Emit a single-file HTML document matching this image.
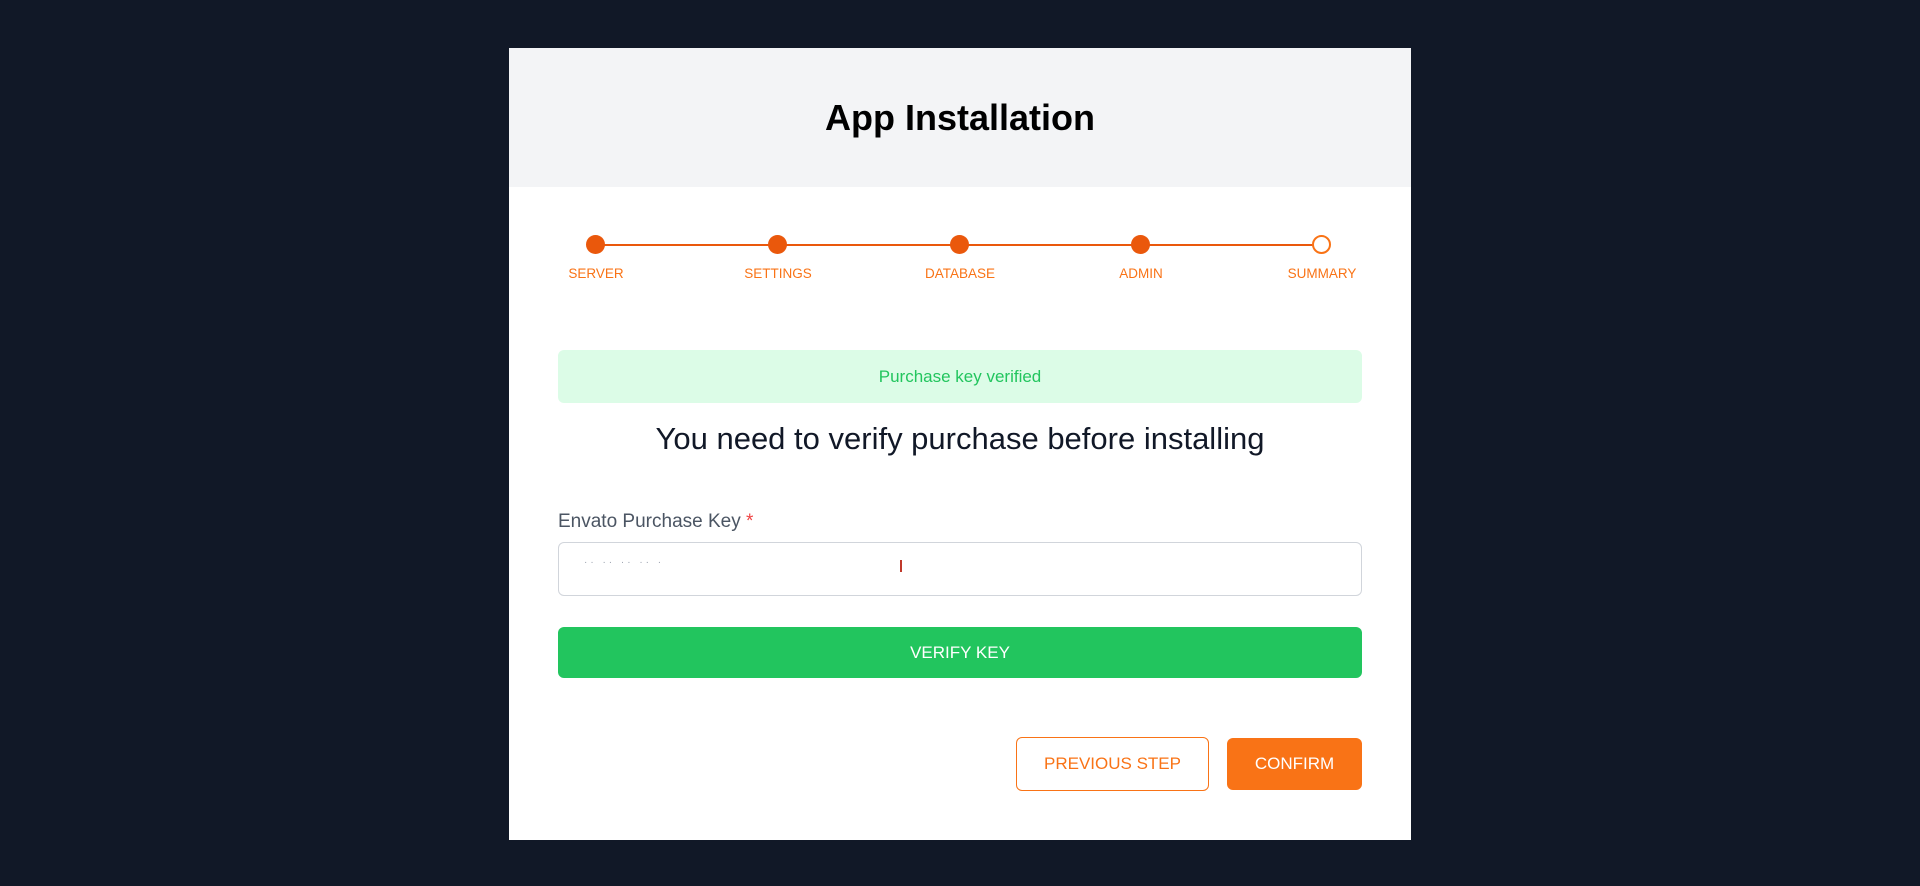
<!DOCTYPE html>
<html><head><meta charset="utf-8"><style>
*{box-sizing:border-box;margin:0;padding:0}
body{width:1920px;height:886px;background:#111827;font-family:"Liberation Sans",sans-serif;position:relative;overflow:hidden}
.card{position:absolute;left:509px;top:48px;width:902px;height:792px;background:#fff}
.hdr{position:absolute;left:0;top:0;width:902px;height:139px;background:#f3f4f6;text-align:center}
.hdr h1{font-size:36px;font-weight:bold;color:#000;line-height:139px}
.abs{position:absolute}
.line{position:absolute;left:87px;top:196px;width:726px;height:2px;background:#ea580c}
.dot{position:absolute;width:19px;height:19px;border-radius:50%;background:#ea580c;top:187px}
.lbl{position:absolute;top:218px;font-size:13.5px;color:#f97316;transform:translateX(-50%);white-space:nowrap}
</style></head><body>
<div class="card">
<div class="hdr"><h1>App Installation</h1></div>
<div class="line"></div>
<div class="dot" style="left:77px"></div>
<div class="dot" style="left:259px"></div>
<div class="dot" style="left:441px"></div>
<div class="dot" style="left:622px"></div>
<div class="dot" style="left:803px;background:#fff;border:2px solid #f97316"></div>
<div class="lbl" style="left:87px">SERVER</div>
<div class="lbl" style="left:269px">SETTINGS</div>
<div class="lbl" style="left:451px">DATABASE</div>
<div class="lbl" style="left:632px">ADMIN</div>
<div class="lbl" style="left:813px">SUMMARY</div>
<div class="abs" style="left:49px;top:302px;width:804px;height:53px;background:#dcfce7;border-radius:6px;color:#22c55e;font-size:17px;text-align:center;line-height:53px">Purchase key verified</div>
<div class="abs" style="left:0;top:373px;width:902px;text-align:center;font-size:31px;color:#111827">You need to verify purchase before installing</div>
<div class="abs" style="left:49px;top:463px;font-size:19px;color:#4b5563">Envato Purchase Key <span style="color:#ef4444">*</span></div>
<div class="abs" style="left:49px;top:494px;width:804px;height:54px;border:1px solid #d1d5db;border-radius:6px">
<span class="abs" style="left:25px;top:14px;font-size:10px;color:#9ca3af;letter-spacing:3px">·· ·· ·· ·· ·</span>
<span class="abs" style="left:341px;top:17px;width:2px;height:12px;background:#c0392b"></span>
</div>
<div class="abs" style="left:49px;top:579px;width:804px;height:51px;background:#22c55e;border-radius:6px;color:#fff;font-size:17px;text-align:center;line-height:51px">VERIFY KEY</div>
<div class="abs" style="left:507px;top:689px;width:193px;height:54px;border:1px solid #f97316;border-radius:6px;color:#f97316;font-size:17px;text-align:center;line-height:52px">PREVIOUS STEP</div>
<div class="abs" style="left:718px;top:690px;width:135px;height:52px;background:#f97316;border-radius:6px;color:#fff;font-size:17px;text-align:center;line-height:52px">CONFIRM</div>
</div>
</body></html>
